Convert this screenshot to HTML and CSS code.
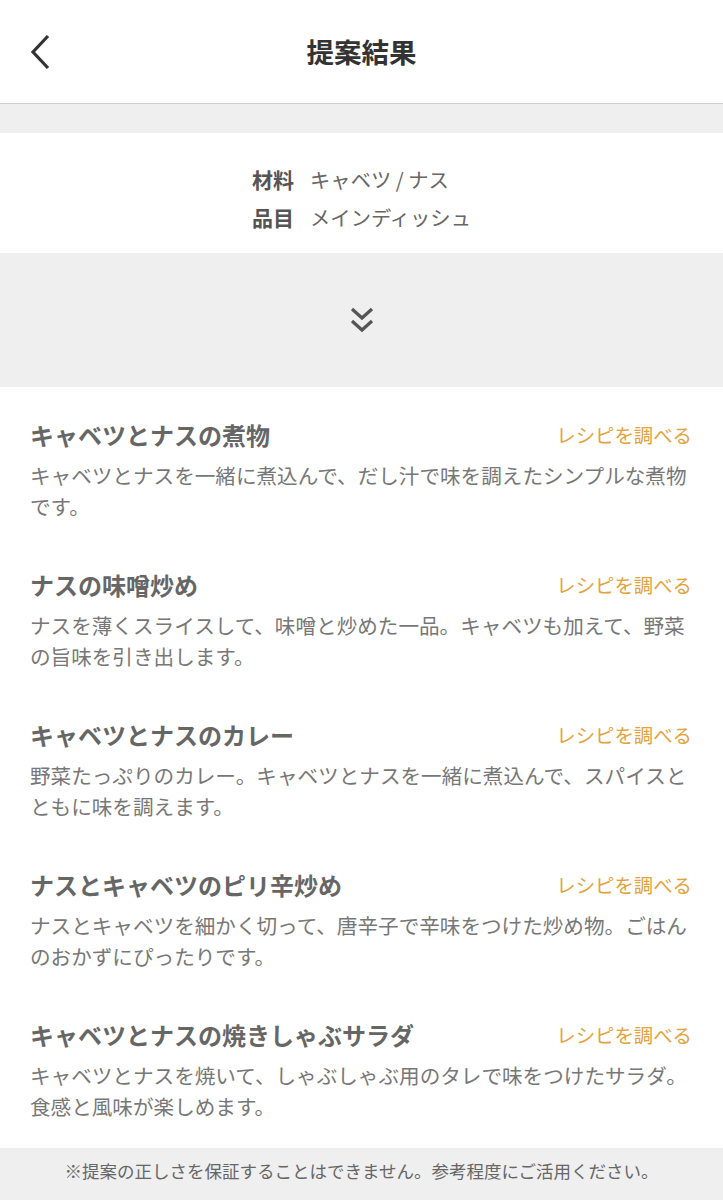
FILE: index.html
```html
<!DOCTYPE html>
<html lang="ja">
<head>
<meta charset="utf-8">
<title>提案結果</title>
<link rel="stylesheet" href="styles.css">
</head>
<body>
<header class="header">
  <button class="back" aria-label="戻る">
    <svg width="22" height="36" viewBox="0 0 22 36"><path d="M19 2 L4 18 L19 34" fill="none" stroke="#333" stroke-width="3.2"/></svg>
  </button>
  <h1 class="title">提案結果</h1>
</header>
<div class="spacer"></div>
<section class="info">
  <dl class="info-list">
    <div class="info-row"><dt>材料</dt><dd>キャベツ / ナス</dd></div>
    <div class="info-row"><dt>品目</dt><dd>メインディッシュ</dd></div>
  </dl>
</section>
<section class="expand">
  <svg width="24" height="28" viewBox="0 0 24 28"><path d="M2 3 L12 12 L22 3 M2 15 L12 24 L22 15" fill="none" stroke="#555" stroke-width="3.2"/></svg>
</section>
<main class="list">
  <article class="item">
    <div class="item-head"><h2>キャベツとナスの煮物</h2><a class="link">レシピを調べる</a></div>
    <p class="desc">キャベツとナスを一緒に煮込んで、だし汁で味を調えたシンプルな煮物です。</p>
  </article>
  <article class="item">
    <div class="item-head"><h2>ナスの味噌炒め</h2><a class="link">レシピを調べる</a></div>
    <p class="desc">ナスを薄くスライスして、味噌と炒めた一品。キャベツも加えて、野菜の旨味を引き出します。</p>
  </article>
  <article class="item">
    <div class="item-head"><h2>キャベツとナスのカレー</h2><a class="link">レシピを調べる</a></div>
    <p class="desc">野菜たっぷりのカレー。キャベツとナスを一緒に煮込んで、スパイスとともに味を調えます。</p>
  </article>
  <article class="item">
    <div class="item-head"><h2>ナスとキャベツのピリ辛炒め</h2><a class="link">レシピを調べる</a></div>
    <p class="desc">ナスとキャベツを細かく切って、唐辛子で辛味をつけた炒め物。ごはんのおかずにぴったりです。</p>
  </article>
  <article class="item">
    <div class="item-head"><h2>キャベツとナスの焼きしゃぶサラダ</h2><a class="link">レシピを調べる</a></div>
    <p class="desc">キャベツとナスを焼いて、しゃぶしゃぶ用のタレで味をつけたサラダ。食感と風味が楽しめます。</p>
  </article>
</main>
<footer class="footer">※提案の正しさを保証することはできません。参考程度にご活用ください。</footer>
</body>
</html>
```
FILE: styles.css
```css
* { box-sizing: border-box; }
html, body { margin: 0; padding: 0; }
body {
  font-family: "Noto Sans CJK JP", "Noto Sans", sans-serif;
  background: #fff;
  color: #666;
}
.header {
  height: 104px;
  border-bottom: 1px solid #cfcfcf;
  display: flex;
  align-items: center;
  justify-content: center;
  position: relative;
  background: #fff;
}
.back {
  position: absolute;
  left: 29px;
  top: 34px;
  padding: 0;
  border: 0;
  background: none;
  line-height: 0;
}
.title {
  margin: 0;
  font-size: 27.5px;
  font-weight: 700;
  color: #333;
  line-height: 1;
}
.spacer { height: 29px; background: #efefef; }
.info {
  padding: 27px 0 17px;
  display: flex;
  justify-content: center;
}
.info-list { margin: 0; }
.info-row { display: flex; height: 38px; align-items: center; }
.info-row dt { font-size: 21px; font-weight: 700; color: #555; width: 58px; }
.info-row dd { margin: 0; font-size: 20.3px; color: #666; }
.expand {
  height: 134px;
  background: #efefef;
  display: flex;
  align-items: center;
  justify-content: center;
}
.list { padding: 33px 31px 0 30px; }
.item { height: 150px; }
.item:last-child { height: 128px; }
.item-head { display: flex; justify-content: space-between; align-items: center; height: 30px; }
.item-head h2 { margin: 0; font-size: 24px; font-weight: 700; color: #666; line-height: 30px; }
.link { color: #e2a33c; font-size: 19.4px; line-height: 30px; }
.desc { margin: 10px 0 0; font-size: 20.6px; line-height: 31px; color: #777; }
.footer {
  background: #efefef;
  height: 52px;
  padding-top: 11px;
  line-height: 24px;
  text-align: center;
  font-size: 17.5px;
  color: #666;
}
```
